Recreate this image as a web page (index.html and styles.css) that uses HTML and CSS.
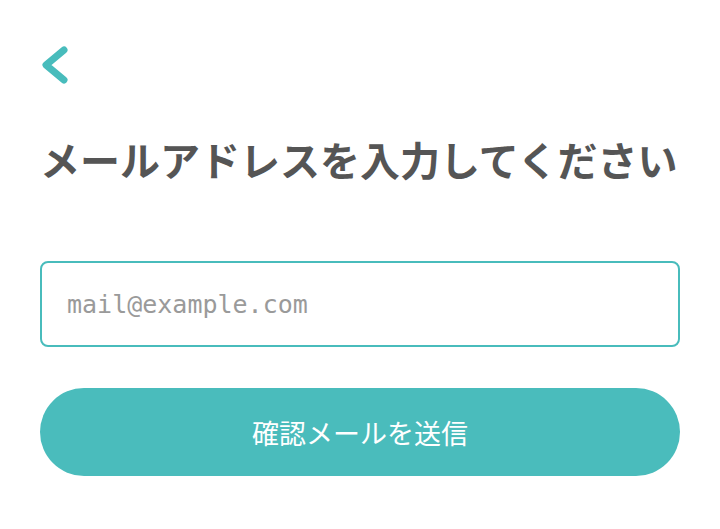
FILE: index.html
```html
<!DOCTYPE html>
<html lang="ja">
<head>
    <meta charset="UTF-8">
    <meta name="viewport" content="width=device-width, initial-scale=1.0">
    <title>メールアドレス入力</title>
    <link rel="stylesheet" href="styles.css">
</head>
<body>
    <div class="container">
        <div class="header">
            <button class="back-button" aria-label="戻る">
                <svg width="30" height="40" viewBox="0 0 30 40">
                    <polyline points="24,5 6,20 24,35" fill="none" stroke="#48bcbc" stroke-width="7" stroke-linecap="round" stroke-linejoin="round"/>
                </svg>
            </button>
        </div>
        <h1 class="title">メールアドレスを入力してください</h1>
        <form class="email-form" onsubmit="return false;">
            <input type="email" class="email-input" placeholder="mail@example.com">
            <button type="submit" class="submit-button">確認メールを送信</button>
        </form>
    </div>
</body>
</html>
```

FILE: styles.css
```css
body {
    font-family: "Noto Sans CJK JP", "Noto Sans", sans-serif;
    margin: 0;
    background-color: #ffffff;
}
.container {
    padding: 0 40px;
}
.header {
    padding-top: 45px;
    height: 40px;
}
.back-button {
    display: block;
    padding: 0;
    border: none;
    background: none;
    cursor: pointer;
}
.back-button svg {
    display: block;
}
.title {
    margin: 46px 0 0;
    font-size: 40px;
    line-height: 56px;
    font-weight: bold;
    color: #555555;
    white-space: nowrap;
}
.email-form {
    display: flex;
    flex-direction: column;
    gap: 41px;
    margin-top: 74px;
}
.email-input {
    box-sizing: border-box;
    width: 100%;
    height: 86px;
    padding: 0 25px;
    border: 2px solid #48bcbc;
    border-radius: 8px;
    font-family: "DejaVu Sans Mono", monospace;
    font-size: 25px;
    color: #555555;
    outline: none;
}
.email-input::placeholder {
    color: #9a9a9a;
}
.submit-button {
    height: 88px;
    border: none;
    border-radius: 44px;
    background-color: #4abcbc;
    color: #ffffff;
    font-family: "Noto Sans CJK JP", "Noto Sans", sans-serif;
    font-size: 27px;
    font-weight: 400;
    cursor: pointer;
}
```
